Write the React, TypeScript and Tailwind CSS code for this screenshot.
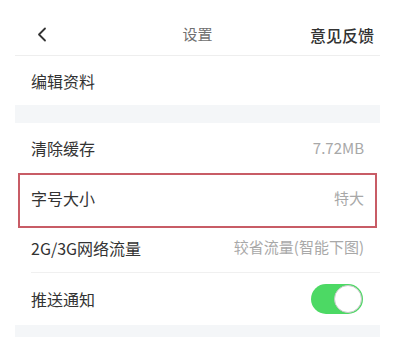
import React from "react";

function Row({
  label,
  value,
  children,
  h,
  divider = true,
}: {
  label: string;
  value?: string;
  children?: React.ReactNode;
  h: string;
  divider?: boolean;
}) {
  return (
    <div className={`relative ${h} flex items-center pl-[16px]`}>
      <div
        className={`flex-1 h-full flex items-center pr-[16px] ${
          divider ? "border-b border-[#f0f0f0]" : ""
        }`}
      >
        <span className="flex-1 text-[16px] text-[#333]">{label}</span>
        {value && <span className="text-[15px] text-[#a8a8a8]">{value}</span>}
        {children}
      </div>
    </div>
  );
}

export default function App() {
  return (
    <div
      className="w-[405px] h-[351px] bg-white overflow-hidden"
      style={{ fontFamily: '"Noto Sans CJK SC", "Noto Sans", sans-serif' }}
    >
      <div className="ml-[15px] w-[365px]">
        {/* Header */}
        <div className="h-[56px] pt-[14px] grid grid-cols-[1fr_auto_1fr] items-center border-b border-[#eeeeee]">
          <div className="pl-[22px] flex items-center">
            <svg width="10" height="15" viewBox="0 0 10 15" fill="none">
              <path
                d="M8 1.5 L2 7.5 L8 13.5"
                stroke="#333"
                strokeWidth="1.8"
                strokeLinecap="round"
                strokeLinejoin="round"
              />
            </svg>
          </div>
          <div className="text-[15px] text-[#707070]">设置</div>
          <div className="flex justify-end pr-[6px] text-[16px] text-[#333] font-medium">
            意见反馈
          </div>
        </div>

        <Row label="编辑资料" h="h-[49px]" divider={false} />
        <div className="h-[18px] bg-[#f4f6f8]" />

        <Row label="清除缓存" value="7.72MB" h="h-[50px]" divider={false} />
        <div className="relative">
          <Row label="字号大小" value="特大" h="h-[50px]" divider={false} />
          <div className="absolute left-[3px] right-[3px] top-0 bottom-[-5px] border-2 border-[#c85c66] pointer-events-none" />
        </div>
        <Row label="2G/3G网络流量" value="较省流量(智能下图)" h="h-[50px]" />
        <Row label="推送通知" h="h-[52px]" divider={false}>
          <div className="w-[52px] h-[30px] rounded-full bg-[#4cd964] flex items-center justify-end p-[1px] mr-[1px]">
            <div className="w-[28px] h-[28px] rounded-full bg-white border border-[#c8c8c8]" />
          </div>
        </Row>
        <div className="h-[12px] bg-[#f4f6f8]" />
      </div>
    </div>
  );
}
